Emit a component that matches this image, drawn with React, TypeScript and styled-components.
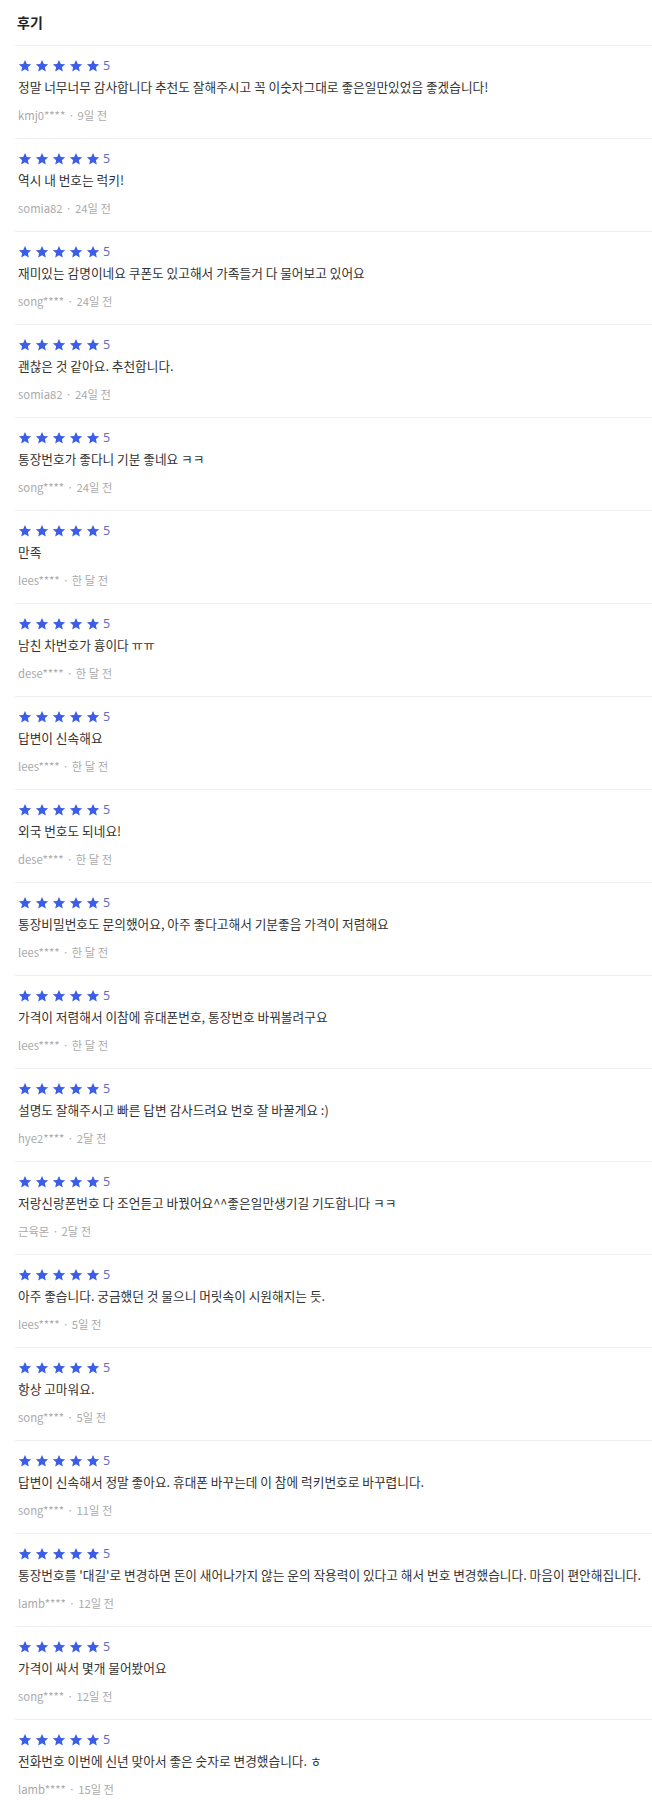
import React from "react";
import styled, { createGlobalStyle } from "styled-components";

const GlobalStyle = createGlobalStyle`
  html, body {
    margin: 0;
    padding: 0;
    background: #ffffff;
  }
  body {
    font-family: "Noto Sans CJK KR", "Noto Sans", sans-serif;
    -webkit-font-smoothing: antialiased;
  }
`;

const Page = styled.div`
  padding-left: 15px;
  background: #fff;
`;

const Header = styled.h2`
  margin: 0;
  padding: 12px 0 13px 2px;
  font-size: 14px;
  line-height: 20px;
  font-weight: 700;
  color: #222;
`;

const List = styled.ul`
  list-style: none;
  margin: 0;
  padding: 0;
`;

const Item = styled.li`
  border-top: 1px solid #f0f0f0;
  height: 93px;
  box-sizing: border-box;
  padding: 12px 0 0 3px;
`;

const Rating = styled.div`
  display: flex;
  align-items: center;
  height: 16px;
`;

const Stars = styled.div`
  display: flex;
  gap: 3px;
`;

const Score = styled.span`
  margin-left: 3px;
  font-family: "Noto Sans", sans-serif;
  font-size: 12.5px;
  line-height: 16px;
  color: #5f6fc7;
`;

const Body = styled.p`
  margin: 3px 0 0 0;
  font-size: 12.7px;
  line-height: 20px;
  color: #333;
  white-space: nowrap;
`;

const Meta = styled.div`
  margin-top: 9px;
  font-size: 11.3px;
  line-height: 18px;
  color: #aaa;
`;

const Dot = styled.span`
  margin: 0 3px;
`;

const Star = () => (
  <svg width="14" height="14" viewBox="0 0 24 24" aria-hidden="true">
    <path
      d="M12 1.5l3.09 6.9 7.41.72-5.6 4.98 1.64 7.4L12 17.7l-6.54 3.8 1.64-7.4L1.5 9.12l7.41-.72z"
      fill="#3b5de7"
    />
  </svg>
);

type Review = { text: string; user: string; when: string };

const reviews: Review[] = [
  { text: "정말 너무너무 감사합니다 추천도 잘해주시고 꼭 이숫자그대로 좋은일만있었음 좋겠습니다!", user: "kmj0****", when: "9일 전" },
  { text: "역시 내 번호는 럭키!", user: "somia82", when: "24일 전" },
  { text: "재미있는 감명이네요 쿠폰도 있고해서 가족들거 다 물어보고 있어요", user: "song****", when: "24일 전" },
  { text: "괜찮은 것 같아요. 추천합니다.", user: "somia82", when: "24일 전" },
  { text: "통장번호가 좋다니 기분 좋네요 ㅋㅋ", user: "song****", when: "24일 전" },
  { text: "만족", user: "lees****", when: "한 달 전" },
  { text: "남친 차번호가 흉이다 ㅠㅠ", user: "dese****", when: "한 달 전" },
  { text: "답변이 신속해요", user: "lees****", when: "한 달 전" },
  { text: "외국 번호도 되네요!", user: "dese****", when: "한 달 전" },
  { text: "통장비밀번호도 문의했어요, 아주 좋다고해서 기분좋음 가격이 저렴해요", user: "lees****", when: "한 달 전" },
  { text: "가격이 저렴해서 이참에 휴대폰번호, 통장번호 바꿔볼려구요", user: "lees****", when: "한 달 전" },
  { text: "설명도 잘해주시고 빠른 답변 감사드려요 번호 잘 바꿀게요 :)", user: "hye2****", when: "2달 전" },
  { text: "저랑신랑폰번호 다 조언듣고 바꿨어요^^좋은일만생기길 기도합니다 ㅋㅋ", user: "근육몬", when: "2달 전" },
  { text: "아주 좋습니다. 궁금했던 것 물으니 머릿속이 시원해지는 듯.", user: "lees****", when: "5일 전" },
  { text: "항상 고마워요.", user: "song****", when: "5일 전" },
  { text: "답변이 신속해서 정말 좋아요. 휴대폰 바꾸는데 이 참에 럭키번호로 바꾸렵니다.", user: "song****", when: "11일 전" },
  { text: "통장번호를 '대길'로 변경하면 돈이 새어나가지 않는 운의 작용력이 있다고 해서 번호 변경했습니다. 마음이 편안해집니다.", user: "lamb****", when: "12일 전" },
  { text: "가격이 싸서 몇개 물어봤어요", user: "song****", when: "12일 전" },
  { text: "전화번호 이번에 신년 맞아서 좋은 숫자로 변경했습니다. ㅎ", user: "lamb****", when: "15일 전" },
];

export default function App() {
  return (
    <>
      <GlobalStyle />
      <Page>
        <Header>후기</Header>
        <List>
          {reviews.map((r, i) => (
            <Item key={i}>
              <Rating>
                <Stars>
                  <Star />
                  <Star />
                  <Star />
                  <Star />
                  <Star />
                </Stars>
                <Score>5</Score>
              </Rating>
              <Body>{r.text}</Body>
              <Meta>
                {r.user}
                <Dot>·</Dot>
                {r.when}
              </Meta>
            </Item>
          ))}
        </List>
      </Page>
    </>
  );
}
